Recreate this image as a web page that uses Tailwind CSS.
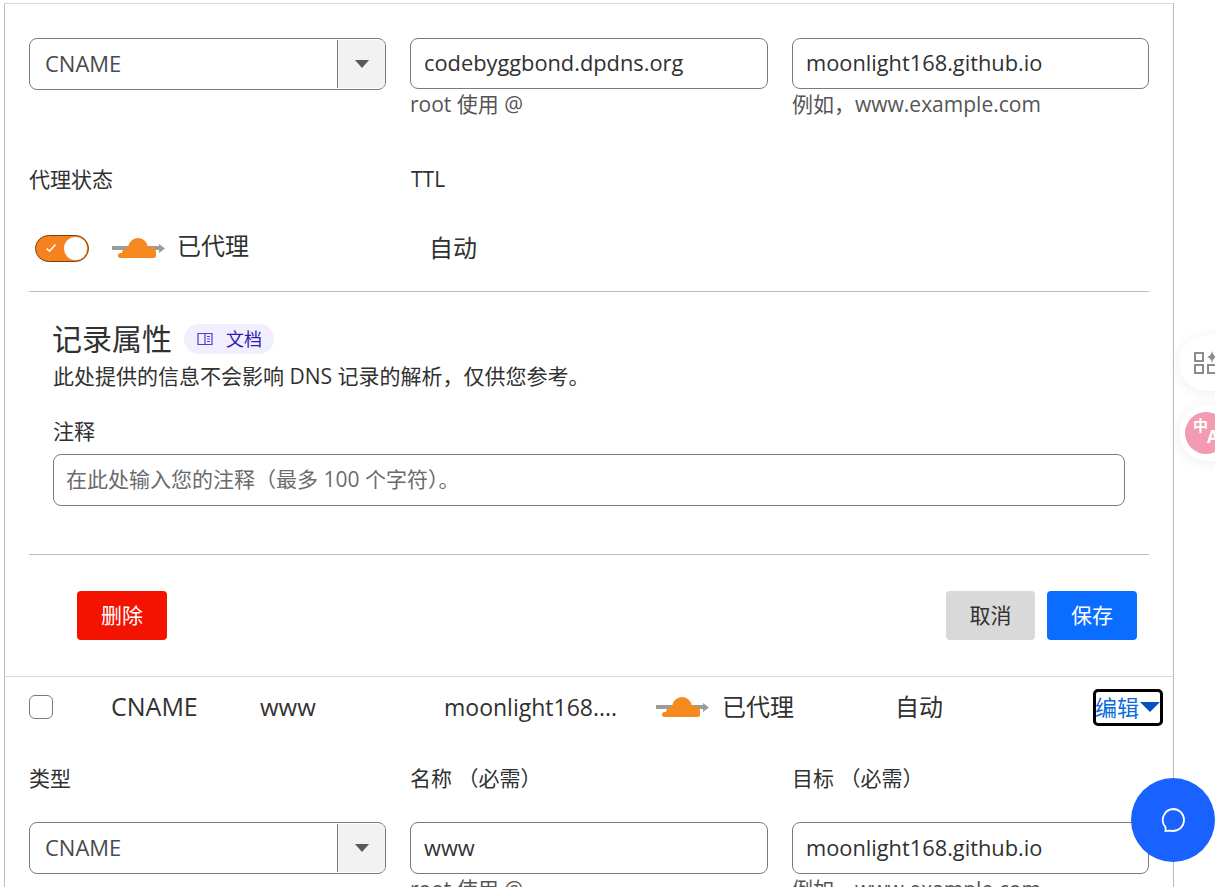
<!DOCTYPE html>
<html lang="zh-CN">
<head>
    <meta charset="UTF-8">
    <title>DNS 记录</title>
    <script src="https://cdn.jsdelivr.net/npm/@tailwindcss/browser@4"></script>
</head>
<body class="bg-white text-[#313131] overflow-hidden font-['Open_Sans','Noto_Sans_CJK_SC',sans-serif]">
<div class="relative h-[887px] w-[1215px] overflow-hidden pt-[3px]">

    <div class="ml-[4px] w-[1170px] h-[884px] border-x border-[#bdbdbd] relative">
        <div class="h-px bg-[#d9d9d9]"></div>

        <!-- first record -->
        <div class="px-[24px] pt-[34px]">
            <div class="grid grid-cols-[357px_358px_357px] gap-x-[24px] items-start h-[97px]">
                <div class="flex h-[52px] border border-[#7a7a7a] rounded-[8px] overflow-hidden">
                    <div class="flex-1 pl-[15px] pb-[2px] flex items-center text-[22px] text-[#4a4a4a]">CNAME</div>
                    <div class="w-[48px] mt-px mb-px border-l border-[#7a7a7a] bg-[#f2f2f2] flex items-center justify-center">
                        <div class="w-0 h-0 border-x-[7px] border-x-transparent border-t-[8px] border-t-[#595959]"></div>
                    </div>
                </div>
                <div>
                    <div class="h-[51px] border border-[#7a7a7a] rounded-[8px] pl-[13px] flex items-center text-[21.800px]">codebyggbond.dpdns.org</div>
                    <div class="text-[21px] leading-[30px] text-[#555]">root 使用 @</div>
                </div>
                <div>
                    <div class="h-[51px] border border-[#7a7a7a] rounded-[8px] pl-[13px] flex items-center text-[21.800px]">moonlight168.github.io</div>
                    <div class="text-[21px] leading-[30px] text-[#555]">例如，www.example.com</div>
                </div>
            </div>

            <div class="grid grid-cols-[357px_358px_357px] gap-x-[24px] mt-[31px] text-[21px] leading-[26px]">
                <div>代理状态</div>
                <div class="pl-px">TTL</div>
            </div>

            <div class="flex items-center h-[48px] mt-[32px] text-[24px]">
                <div class="ml-[6px] w-[54px] h-[27px] rounded-full bg-[#f6821f] border border-[#7a3f0c] flex items-center justify-between pl-[9px] pr-[1px]">
                    <svg width="12" height="10" viewBox="0 0 12 10" fill="none" stroke="#fff" stroke-width="1.6"><path d="M1.5 5.5 4.5 8.2 10.5 1.5"/></svg>
                    <div class="w-[23px] h-[23px] rounded-full bg-white"></div>
                </div>
                <svg class="ml-[23px]" width="54" height="22" viewBox="0 0 54 22">
                    <path d="M0 9h47V7l6 4.500-6 4.500v-3H0z" fill="#9c9c9c"/>
                    <g fill="#f6891f">
                        <circle cx="26" cy="11" r="10"/>
                        <circle cx="15" cy="16" r="5"/>
                        <rect x="30" y="10" width="14" height="11" rx="5"/>
                        <rect x="6" y="16" width="38" height="5" rx="2.500"/>
                    </g>
                </svg>
                <span class="ml-[11px] -mt-[4px]">已代理</span>
                <span class="ml-[180px]">自动</span>
            </div>
        </div>

        <div class="mx-[24px] mt-[19px] h-px bg-[#bdbdbd]"></div>

        <!-- record attributes -->
        <div class="px-[48px] pt-[26px]">
            <div class="flex items-center h-[42px]">
                <h3 class="-ml-px text-[30px] leading-[42px]">记录属性</h3>
                <a class="ml-[12px] flex items-center h-[30px] w-[90px] rounded-full bg-[#f1eefe] pl-[13px] text-[18px] text-[#2d1ab0]">
                    <svg width="16" height="14" viewBox="0 0 16 14" fill="none" stroke="#4c3fd6" stroke-width="1.200"><path d="M1 1.500h14v11H1zM8 1.500v11M10 4.500h3M10 7h3M10 9.500h3"/></svg>
                    <span class="ml-[13px]">文档</span>
                </a>
            </div>
            <p class="text-[21px] leading-[28px] mt-[2px]">此处提供的信息不会影响 DNS 记录的解析，仅供您参考。</p>
            <label class="block text-[21px] leading-[28px] mt-[27px]">注释</label>
            <div class="mt-[9px] h-[52px] border border-[#7a7a7a] rounded-[8px] pl-[12px] flex items-center text-[21px] text-[#6b6b6b]">在此处输入您的注释（最多 100 个字符）。</div>
        </div>

        <div class="mx-[24px] mt-[48px] h-px bg-[#bdbdbd]"></div>

        <div class="flex justify-between pl-[72px] pr-[36px] pt-[36px]">
            <button class="w-[90px] h-[49px] rounded-[4px] bg-[#f41300] text-white text-[21px]">删除</button>
            <div class="flex gap-[12px]">
                <button class="w-[89px] h-[49px] rounded-[4px] bg-[#d9d9d9] text-[21px]">取消</button>
                <button class="w-[90px] h-[49px] rounded-[4px] bg-[#0a6dff] text-white text-[21px]">保存</button>
            </div>
        </div>

        <div class="mt-[36px] h-px bg-[#d9d9d9]"></div>

        <!-- second record row -->
        <div class="flex items-center h-[60px] text-[24px] relative">
            <div class="ml-[24px] w-[24px] h-[24px] border border-[#7a7a7a] rounded-[6px]"></div>
            <span class="ml-[58px] w-[149px] text-[25px]">CNAME</span>
            <span class="w-[184px]">www</span>
            <span class="w-[212px] text-[23px]">moonlight168....</span>
            <svg width="54" height="22" viewBox="0 0 54 22">
                <path d="M0 9h47V7l6 4.500-6 4.500v-3H0z" fill="#9c9c9c"/>
                <g fill="#f6891f">
                    <circle cx="26" cy="11" r="10"/>
                    <circle cx="15" cy="16" r="5"/>
                    <rect x="30" y="10" width="14" height="11" rx="5"/>
                    <rect x="6" y="16" width="38" height="5" rx="2.500"/>
                </g>
            </svg>
            <span class="ml-[12px] w-[173px]">已代理</span>
            <span class="w-[198px]">自动</span>
            <div class="w-[70px] h-[37px] border-[3px] border-black rounded-[5px] flex items-center text-[#0a6dd9] text-[22px] leading-none">
                <span class="shrink-0 -ml-px">编辑</span>
                <div class="ml-px w-0 h-0 shrink-0 border-x-[10px] border-x-transparent border-t-[10px] border-t-[#0051c3]"></div>
            </div>
        </div>

        <div class="px-[24px] pt-[27px]">
            <div class="grid grid-cols-[357px_358px_357px] gap-x-[24px] text-[21px] leading-[28px]">
                <div>类型</div>
                <div>名称 （必需）</div>
                <div>目标 （必需）</div>
            </div>
            <div class="grid grid-cols-[357px_358px_357px] gap-x-[24px] items-start mt-[30px]">
                <div class="flex h-[52px] border border-[#7a7a7a] rounded-[8px] overflow-hidden">
                    <div class="flex-1 pl-[15px] pb-[2px] flex items-center text-[22px] text-[#4a4a4a]">CNAME</div>
                    <div class="w-[48px] mt-px mb-px border-l border-[#7a7a7a] bg-[#f2f2f2] flex items-center justify-center">
                        <div class="w-0 h-0 border-x-[7px] border-x-transparent border-t-[8px] border-t-[#595959]"></div>
                    </div>
                </div>
                <div>
                    <div class="h-[52px] border border-[#7a7a7a] rounded-[8px] pl-[13px] flex items-center text-[21.800px]">www</div>
                    <div class="text-[21px] leading-[30px] text-[#555]">root 使用 @</div>
                </div>
                <div>
                    <div class="h-[52px] border border-[#7a7a7a] rounded-[8px] pl-[13px] flex items-center text-[21.800px]">moonlight168.github.io</div>
                    <div class="text-[21px] leading-[30px] text-[#555]">例如，www.example.com</div>
                </div>
            </div>
        </div>
    </div>

    <!-- floating side widgets -->
    <div class="absolute left-[1179px] top-[335px] w-[70px] h-[56px] rounded-l-full bg-white shadow-[0_2px_14px_rgba(0,0,0,0.07)] flex items-center pl-[15px]">
        <svg width="26" height="26" viewBox="0 0 26 26" fill="none" stroke="#8c8c8c" stroke-width="2">
            <path d="M1 3h8v8H1zM1 15h8v8H1zM14 15h8v8h-8z"/>
            <path d="M18 1q1 5 5 6-4 1-5 6-1-5-5-6 4-1 5-6z" fill="#8c8c8c" stroke="none"/>
        </svg>
    </div>
    <div class="absolute left-[1179px] top-[405px] w-[70px] h-[56px] rounded-l-full bg-white shadow-[0_2px_14px_rgba(0,0,0,0.07)] flex items-center pl-[6px]">
        <div class="w-[42px] h-[42px] rounded-full bg-[#f29bb2] text-white font-bold text-[15px] leading-[15px] pl-[8px] pt-[6px] shrink-0 flex">
            <span>中</span><span class="mt-[11px] -ml-[1px] text-[17px]">A</span>
        </div>
    </div>
    <div class="absolute left-[1131px] top-[778px] w-[84px] h-[84px] rounded-full bg-[#1a62ff] flex items-center justify-center">
        <svg width="26" height="26" viewBox="0 0 26 26" fill="none" stroke="#fff" stroke-width="1.800">
            <path d="M13 2a11 11 0 0 1 0 22c-1 0-2-.1-3-.4L5.500 24v-3.800A11 11 0 0 1 13 2z"/>
        </svg>
    </div>
</div>
</body>
</html>
